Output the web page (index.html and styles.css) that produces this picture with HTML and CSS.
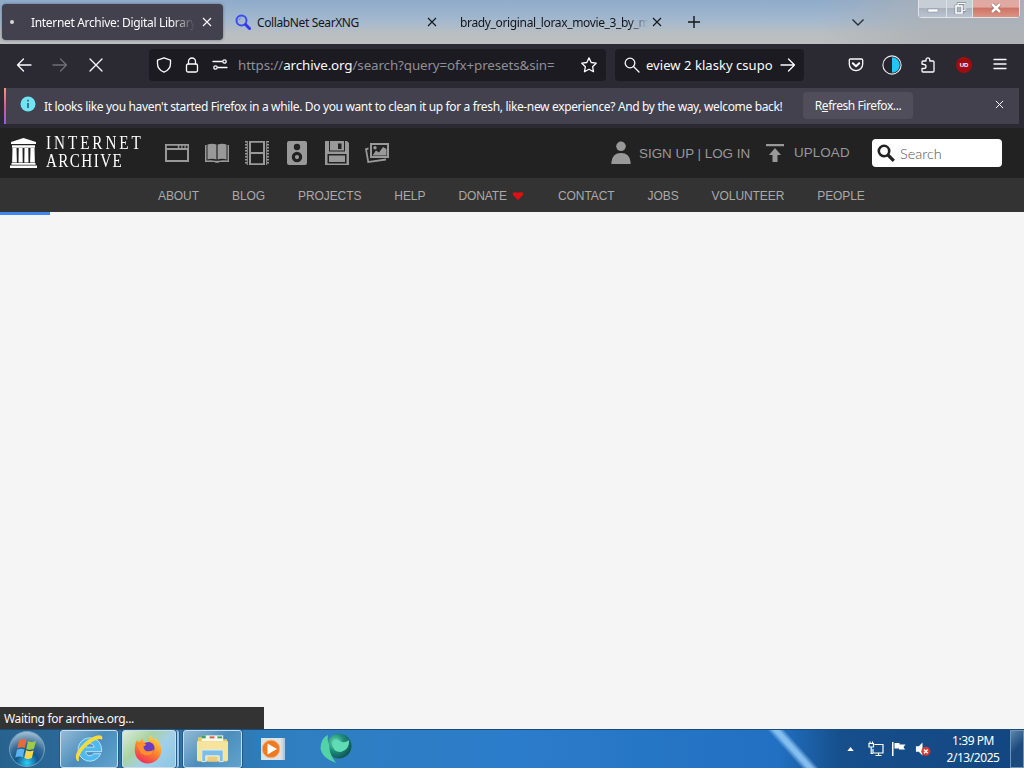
FILE: index.html
```html
<!DOCTYPE html>
<html lang="en">
<head>
<meta charset="UTF-8">
<meta name="viewport" content="width=device-width, initial-scale=1.0">
<link rel="stylesheet" href="styles.css">
<title>Internet Archive: Digital Library</title>
</head>
<body>
<div class="screen">
    <!-- tab strip -->
    <div class="tabs">
        <div class="tab active">
            <span class="dot"></span>
            <span class="tab-title t1">Internet Archive: Digital Library</span>
            <svg class="tab-close" viewBox="0 0 10 10"><path d="M1 1l8 8M9 1l-8 8"/></svg>
        </div>
        <div class="tab second">
            <svg class="searx" viewBox="0 0 16 16"><circle cx="6.500" cy="6.500" r="5" fill="none" stroke="#3b4bf0" stroke-width="2"/><path d="M4 6.500a2.500 2.500 0 0 1 2.500-2.500" fill="none" stroke="#7c8df5" stroke-width="1.200"/><path d="M10.500 10.500l4 4" stroke="#3036ff" stroke-width="3" stroke-linecap="round"/></svg>
            <span class="tab-title t2">CollabNet SearXNG</span>
            <svg class="tab-close" viewBox="0 0 10 10"><path d="M1 1l8 8M9 1l-8 8"/></svg>
        </div>
        <div class="tab third">
            <span class="tab-title t3">brady_original_lorax_movie_3_by_m</span>
            <svg class="tab-close" viewBox="0 0 10 10"><path d="M1 1l8 8M9 1l-8 8"/></svg>
        </div>
        <svg class="new-tab" viewBox="0 0 12 12"><path d="M6 0v12M0 6h12"/></svg>
        <svg class="all-tabs" viewBox="0 0 12 8"><path d="M0.500 1.500l5.500 5.500 5.500-5.500"/></svg>
        <div class="win-buttons">
            <div class="win min"><svg viewBox="0 0 12 12"><rect x="1" y="7" width="10" height="3" fill="#fff" stroke="#8c98a8" stroke-width=".6"/></svg></div>
            <div class="win max"><svg viewBox="0 0 12 12"><path d="M4 4V1.500h7v7H8.500" fill="none" stroke="#7d8896" stroke-width="2.400"/><rect x="2" y="4" width="6" height="7" fill="none" stroke="#7d8896" stroke-width="2.800"/><path d="M4 4V1.500h7v7H8.500" fill="none" stroke="#fff" stroke-width="1.200"/><rect x="2" y="4" width="6" height="7" fill="none" stroke="#fff" stroke-width="1.600"/></svg></div>
            <div class="win close"><svg viewBox="0 0 12 12"><path d="M2 2l8 8M10 2l-8 8" stroke="#8f5650" stroke-width="3.800"/><path d="M2 2l8 8M10 2l-8 8" stroke="#fff" stroke-width="2.600"/></svg></div>
        </div>
    </div>

    <!-- navigation toolbar -->
    <div class="toolbar">
        <svg class="ic back" viewBox="0 0 16 16"><path d="M15 8H1.500M7.500 2l-6 6 6 6"/></svg>
        <svg class="ic forward" viewBox="0 0 16 16"><path d="M1 8h13.500M8.500 2l6 6-6 6"/></svg>
        <svg class="ic stop" viewBox="0 0 16 16"><path d="M2 2l12 12M14 2L2 14"/></svg>
        <div class="urlbar">
            <svg class="ic" viewBox="0 0 16 16"><path d="M8 .8l6.500 2.400v3.300c0 4-2.300 7-6.500 8.700C3.800 13.500 1.500 10.500 1.500 6.500V3.200z"/></svg>
            <svg class="ic lock" viewBox="0 0 16 16"><rect x="2.500" y="7" width="11" height="8" rx="1.500"/><path d="M4.500 7V4.500a3.500 3.500 0 0 1 7 0V7"/></svg>
            <svg class="ic perms" viewBox="0 0 16 16"><path d="M1 4.500h9M15 10.500H6"/><circle cx="12.500" cy="4.500" r="1.700"/><circle cx="3.500" cy="10.500" r="1.700"/></svg>
            <span class="url">https://<b>archive.org</b>/search?query=ofx+presets&amp;sin=</span>
            <svg class="ic star" viewBox="0 0 16 16"><path d="M8 .9l2.200 4.600 5 .7-3.600 3.500.9 5L8 12.300 3.500 14.700l.9-5L.8 6.200l5-.7z"/></svg>
        </div>
        <div class="searchbar">
            <svg class="ic" viewBox="0 0 16 16"><circle cx="6" cy="6" r="4.800"/><path d="M9.500 9.500l5.500 5.500"/></svg>
            <span class="query">eview 2 klasky csupo</span>
            <svg class="ic go" viewBox="0 0 16 16"><path d="M1 8h13.500M8.500 2l6 6-6 6"/></svg>
        </div>
        <div class="extensions">
            <svg class="ic" viewBox="0 0 16 16"><path d="M2.500 2h11q1.200 0 1.200 1.200V7a6.700 6.700 0 0 1-13.400 0V3.200Q1.300 2 2.500 2z"/><path d="M4.800 6.300L8 9.300l3.200-3" stroke-width="2"/></svg>
            <svg class="reader" viewBox="0 0 18 18"><circle cx="9" cy="9" r="8.200" fill="#26252c" stroke="#e8e8ec" stroke-width="1"/><path d="M9 2a7 7 0 0 1 0 14z" fill="#22c5f4"/></svg>
            <svg class="ic puzzle" viewBox="0 0 16 16"><path d="M2 7V5q0-1 1-1h3V2.700a1.900 1.900 0 0 1 3.800 0V4h3.200q1 0 1 1v9q0 1-1 1H3q-1 0-1-1v-2.500h2a2 2 0 0 0 0-4z"/></svg>
            <span class="ublock">UD</span>
            <svg class="ic menu" viewBox="0 0 16 16"><path d="M2 2.500h12M2 7h12M2 11.500h12"/></svg>
        </div>
    </div>

    <!-- welcome back bar -->
    <div class="notice">
        <svg class="info" viewBox="0 0 16 16"><circle cx="8" cy="8" r="7.500" fill="#6fe4f5"/><path d="M8 7v5M8 3.800v1.700" stroke="#38566a" stroke-width="1.600"/></svg>
        <span class="notice-text">It looks like you haven't started Firefox in a while. Do you want to clean it up for a fresh, like-new experience? And by the way, welcome back!</span>
        <div class="refresh"><span>R<u>e</u>fresh Firefox...</span></div>
        <svg class="notice-close" viewBox="0 0 10 10"><path d="M1 1l8 8M9 1l-8 8"/></svg>
    </div>

    <!-- archive.org -->
    <div class="topnav">
        <svg class="temple" viewBox="0 0 27 30"><path d="M13.500 0L26 4v2H1V4zM2 7.300h23v2.400H2zM0 27.500h27V30H0zM1.500 25h24v1.700h-24z"/><path d="M2.500 10h4l.4 14.500H2.100zM8.700 10h3.800l.2 14.500H8.500zM14.500 10h3.800l.2 14.500h-4.200zM20.500 10h4l.4 14.500h-4.800z"/></svg>
        <div class="wordmark"><span class="w1">INTERNET</span><span class="w2">ARCHIVE</span></div>
        <div class="media">
            <svg viewBox="0 0 24 24"><path fill-rule="evenodd" d="M0 3h24v18H0zM2 9v10h20V9zM1.800 4.800v2.200h11v-2.200zM14.300 4.800v2.200h2v-2.200zM17.500 4.800v2.200h2v-2.200zM20.700 4.800v2.200h1.800v-2.200z"/></svg>
            <svg viewBox="0 0 24 24"><path d="M2.500 3.500Q7 2 11.400 3.500v15Q7 17 2.500 18.500zM12.600 3.500Q17 2 21.500 3.500v15Q17 17 12.600 18.500z"/><path d="M0 4h1.500v15.500q5-.8 9 .3h3q4-1.100 9-.3V4H24v17h-9.500l-1 .8h-3l-1-.8H0z"/></svg>
            <svg viewBox="0 0 24 24"><path fill-rule="evenodd" d="M4 0h16v24H4zM6 1.700v9.400h12V1.700zM6 13v9.300h12V13z"/><path class="film" d="M1 0v24M23 0v24"/><path class="perf" d="M2.300 0v24M21.700 0v24"/></svg>
            <svg viewBox="0 0 24 24"><path fill-rule="evenodd" d="M4 0h16q2 0 2 2v20q0 2-2 2H4q-2 0-2-2V2q0-2 2-2zM12 2.800a3.200 3.200 0 1 0 0 6.400 3.200 3.200 0 1 0 0-6.400zM12 10.800a5.200 5.200 0 1 0 0 10.400 5.200 5.200 0 1 0 0-10.400zM12 14a2.100 2.100 0 1 1 0 4.200 2.100 2.100 0 1 1 0-4.200z"/></svg>
            <svg viewBox="0 0 24 24"><path d="M0 0h22l2 2v22H0z"/><path class="cut" d="M4 0h1v9.500h14V0h1v10.500H4zM13 2.500h3.500v5.500H13zM2.500 13h19v9.500h-19z"/><path d="M4 14.500h16v6.500H4z"/></svg>
            <svg viewBox="0 0 24 24"><path fill-rule="evenodd" d="M5 2h19v15H5zM7 4v11h15V4z"/><path d="M7.500 14.500l3.500-5 3 2 4-5.500 3.500 2v6.500z"/><circle cx="10" cy="6.700" r="1.700"/><path d="M0 7.500l3.500-1v2l-1.500.4 2 11 17-2.500v2L2.500 22z"/></svg>
        </div>
        <svg class="person" viewBox="0 0 20 24"><circle cx="10" cy="5.500" r="5"/><path d="M0 24v-2q1-9.500 10-9.500T20 22v2z"/></svg>
        <span class="login">SIGN UP | LOG IN</span>
        <svg class="upload-ic" viewBox="0 0 18 20"><path d="M0 1h18v2.300H0zM9 5l6 7h-3.500V19H6.500v-7H3z"/></svg>
        <span class="upload">UPLOAD</span>
        <div class="ia-search">
            <svg viewBox="0 0 18 18"><circle cx="7" cy="7" r="5.200" fill="none" stroke="#222" stroke-width="2.600"/><path d="M11 11l5.800 5.800" stroke="#222" stroke-width="3.200"/></svg>
            <span>Search</span>
        </div>
    </div>
    <div class="subnav">
        <span>ABOUT</span><span>BLOG</span><span>PROJECTS</span><span>HELP</span>
        <span class="donate">DONATE<svg viewBox="0 0 12 8"><path d="M1.500.5Q4-.2 6 .8 8-.2 10.500.5q1.500 1.500 0 3L6 8 1.500 3.500Q0 2 1.500.5z"/></svg></span>
        <span>CONTACT</span><span>JOBS</span><span>VOLUNTEER</span><span>PEOPLE</span>
    </div>
    <div class="page">
        <div class="progress"></div>
        <div class="status">Waiting for archive.org...</div>
    </div>

    <!-- taskbar -->
    <div class="taskbar">
        <svg class="start" viewBox="0 0 38 38"><defs><radialGradient id="orb" cx=".5" cy=".9" r=".9"><stop offset="0" stop-color="#2cd0fa"/><stop offset=".35" stop-color="#14568c"/><stop offset=".6" stop-color="#356a94"/><stop offset="1" stop-color="#a8c4d6"/></radialGradient></defs><circle cx="19" cy="19" r="17.500" fill="url(#orb)" stroke="#73a0c2"/><path d="M11 10.500q4-2.500 7.500-.5l-1.700 8q-3.500-1.800-7.500.3z" fill="#e8693a"/><path d="M20 11q4 2 8-.3l-2 8q-4 2.200-7.700.2z" fill="#9bcb4a"/><path d="M9 19.700q4-2 7.500-.2l-1.700 7.700q-3.500-1.700-7.500.3z" fill="#5bb4ee"/><path d="M18 20.300q4 2 7.700-.1l-1.900 7.700q-3.800 2-7.500.2z" fill="#fbd64a"/></svg>
        <div class="task ie"><svg viewBox="0 0 32 32"><path fill-rule="evenodd" d="M17 4a12.500 12.500 0 1 0 11.500 17h-7.500q-1.500 2.200-4 2.200-4 0-4.500-4.400h17Q30 5 17 4zm-4.500 10q.7-3.800 4.500-3.800t4.600 3.800z" fill="#4fb9f0" stroke="#d9f3ff" stroke-width=".8"/><path d="M3.500 29Q-2 22 11 9.500 22 0 28.500 1.500q3 1 1 5Q28 3.500 20 8 9 15 6 23q-1.500 3.500-.5 5.500z" fill="#f4dc3c"/></svg></div>
        <div class="task ff"><svg viewBox="0 0 32 32"><defs><linearGradient id="fox" x1=".8" y1="0" x2=".3" y2="1"><stop offset="0" stop-color="#ffe04a"/><stop offset=".5" stop-color="#ff8a2a"/><stop offset="1" stop-color="#ef2c5c"/></linearGradient></defs><path d="M19 1q1 3 4 5.500 1-1 1-2.500 6 5.500 6 13a14 14 0 0 1-28 1Q1.500 11 4.500 6q.5 2 1.500 3 2-3 4-4 0 2 1.500 3.500 3 0 5 .5Q16 4 19 1z" fill="url(#fox)"/><circle cx="16.500" cy="15" r="6.500" fill="#6b3bc4"/><path d="M4 12q5-4 10-1-1 2-3 2.500 1 5 5.500 5 3.500 0 5.500-2-.5 5.500-6 6-7 .5-9-5-1-3.500-3-5.500z" fill="#ff8f2b"/></svg></div>
        <div class="task folder"><svg viewBox="0 0 34 30"><path d="M2 3h11l2 2h17v23H2z" fill="#e9c969"/><path d="M6 1h22v6H6z" fill="#f8f9ec"/><path d="M6 1h4v3H6z" fill="#3aa45b"/><path d="M14 2h5v2h-5z" fill="#d8584b"/><path d="M22 2h5v2h-5z" fill="#4d9c5a"/><path d="M1 7h32v20H1z" fill="#f6e49c"/><path d="M6 28V17q0-1 1-1h20q1 0 1 1v11h-4v-6H10v6z" fill="#7ebee6" stroke="#d4efff"/><path d="M12 23h10v5H12z" fill="#e9cd7c"/></svg></div>
        <svg class="player" viewBox="0 0 26 26"><path d="M6 2h19v22H6z" fill="#a9cae6"/><path d="M3 2h20v22H3z" fill="#c9dcec"/><rect x="1" y="2" width="20" height="22" fill="#dbe3e6"/><circle cx="11" cy="13" r="8.800" fill="#ee7a22" stroke="#f6b27c"/><path d="M7.500 7.500l9.500 5.500-9.500 5.500z" fill="#fff"/></svg>
        <svg class="orb2" viewBox="0 0 32 32"><defs><radialGradient id="teal" cx=".35" cy=".35" r=".75"><stop offset="0" stop-color="#6fe0b8"/><stop offset=".45" stop-color="#1f8f7c"/><stop offset="1" stop-color="#0b4c50"/></radialGradient></defs><circle cx="19" cy="13" r="12.500" fill="url(#teal)"/><path d="M8 2q-1 6 1 9l1 8q2 6 6 11Q2 25 .5 16 .5 5 8 2z" fill="#53d2a8"/><path d="M12 9q4-5 8-1 4 3 9-1 1 9-8 12-9 0-9-10z" fill="#5fdcb4"/></svg>
        <div class="tray">
            <svg class="up" viewBox="0 0 8 5"><path d="M4 0l4 5H0z"/></svg>
            <svg class="net" viewBox="0 0 16 16"><path d="M6.500 3.500H15v8.500H5V8M7.500 14.500h6M10.500 12v2.500M1 2.500h4.500V6H1zM2 .500v2M4.500.500v2M3.200 6v6.500H5"/></svg>
            <svg class="flag" viewBox="0 0 16 16"><path d="M1 1h1.500v14H1zM3.500 2h5v1.500h6L12.500 6l1.500 2.500H8V7.500H3.500z"/></svg>
            <svg class="vol" viewBox="0 0 17 16"><path d="M1 5h3l4-4v14l-4-4H1z" fill="#fff"/><circle cx="11.500" cy="10.500" r="4.800" fill="#d83a32"/><path d="M9.500 8.500l4 4M13.500 8.500l-4 4" stroke="#fff" stroke-width="1.500"/></svg>
            <div class="clock"><span>1:39 PM</span><span class="date">2/13/2025</span></div>
            <div class="peek"></div>
        </div>
    </div>
</div>
</body>
</html>
```

FILE: styles.css
```css
body {
    margin: 0;
    font-family: "Noto Sans", sans-serif;
    overflow: hidden;
}

svg {
    display: block;
    flex: none;
}

.screen {
    width: 1024px;
    height: 768px;
    display: flex;
    flex-direction: column;
    background: #f5f5f5;
}

.screen > div {
    box-sizing: border-box;
    flex: none;
    white-space: nowrap;
}

/* tab strip */
.tabs {
    display: flex;
    align-items: center;
    height: 44px;
    padding-left: 2px;
    color: #15141a;
    font-size: 12px;
    background:
        linear-gradient(to right, rgba(190, 195, 200, 0) 80%, rgba(172, 176, 180, .8) 91%),
        linear-gradient(to bottom, #8fabcb 0, #a2b8ce 45%, #b9bec2 75%, #bdbfc0 100%);
}

.tab {
    display: flex;
    align-items: center;
    box-sizing: border-box;
    height: 36px;
}

.tab-title {
    overflow: hidden;
}

.tab-close {
    width: 10px;
    height: 10px;
    fill: none;
    stroke: currentColor;
    stroke-width: 1.1;
}

.active {
    width: 221px;
    padding-left: 8px;
    border-radius: 4px;
    background: #42414d;
    color: #fbfbfe;
    box-shadow: 0 0 3px rgba(40, 40, 60, .5);
}

.dot {
    width: 4px;
    height: 4px;
    border-radius: 2px;
    background: #d5d5dc;
}

.t1 {
    width: 164px;
    margin: 0 7px 0 17px;
    letter-spacing: -.33px;
    -webkit-mask-image: linear-gradient(to right, #000 86%, transparent);
}

.second {
    width: 214px;
    padding-left: 12px;
}

.searx {
    width: 16px;
    height: 16px;
}

.t2 {
    width: 164px;
    margin: 0 6px;
    letter-spacing: -.38px;
}

.third {
    width: 225px;
    padding-left: 23px;
}

.t3 {
    width: 188px;
    margin-right: 4px;
    letter-spacing: -.35px;
    -webkit-mask-image: linear-gradient(to right, #000 90%, transparent);
}

.new-tab {
    width: 12px;
    height: 12px;
    margin-left: 26px;
    fill: none;
    stroke: #15141a;
    stroke-width: 1.4;
}

.all-tabs {
    width: 12px;
    height: 8px;
    margin-left: 152px;
    fill: none;
    stroke: #2a2f38;
    stroke-width: 1.4;
}

.win-buttons {
    display: flex;
    align-self: flex-start;
    margin-left: 54px;
    height: 17px;
    border: 1px solid #e0e4e9;
    border-top: 0;
    border-radius: 0 0 4px 4px;
}

.win {
    display: flex;
    justify-content: center;
    align-items: center;
    width: 27px;
    background: linear-gradient(#c8ced6 45%, #a9b2bd 50%, #bac4d0);
    border-right: 1px solid #e0e4e9;
}

.win svg {
    width: 12px;
    height: 12px;
    margin-top: -2px;
}

.win.max {
    width: 25px;
}

.win.close {
    width: 46px;
    border: 0;
    background: linear-gradient(#e0aaa2 40%, #cd7567 50%, #dc9484);
}

/* navigation toolbar */
.toolbar {
    display: flex;
    align-items: center;
    height: 44px;
    padding: 0 0 2px 16px;
    background: #2b2a33;
}

.ic {
    width: 16px;
    height: 16px;
    fill: none;
    stroke: #fbfbfe;
    stroke-width: 1.3;
    stroke-linejoin: round;
    stroke-linecap: round;
}

.forward {
    margin: 0 20px;
    stroke: #6f6e77;
}

.urlbar,
.searchbar {
    display: flex;
    align-items: center;
    box-sizing: border-box;
    height: 32px;
    background: #1c1b22;
    border-radius: 4px;
}

.urlbar {
    width: 457px;
    margin-left: 45px;
    padding-left: 7px;
}

.lock {
    margin: 0 12px;
}

.url {
    width: 343px;
    margin-left: 10px;
    font-size: 13.4px;
    color: #8f8f98;
    letter-spacing: -.12px;
}

.url b {
    font-weight: normal;
    color: #fbfbfe;
}

.searchbar {
    width: 189px;
    margin-left: 9px;
    padding-left: 9px;
}

.query {
    width: 128px;
    margin: 0 6px;
    font-size: 13px;
    letter-spacing: .05px;
    color: #fbfbfe;
}

.extensions {
    display: flex;
    align-items: center;
    gap: 20px;
    margin-left: 44px;
}

.reader {
    width: 20px;
    height: 20px;
    margin: 0 -2px;
}

.ublock {
    width: 16px;
    height: 16px;
    border-radius: 8px;
    background: #a00c12;
    color: #fff;
    font: bold 6px/16px "Liberation Sans", sans-serif;
    text-align: center;
}

/* welcome back bar */
.notice {
    display: flex;
    align-items: center;
    height: 36px;
    margin-right: 5px;
    margin-left: 4px;
    padding-left: 14px;
    border-left: 2px solid;
    border-image: linear-gradient(#ff9a6a, #e0569a, #9059ff) 1;
    background: #42414d;
    color: #fbfbfe;
    font-size: 12px;
    box-shadow: 0 0 0 6px #2b2a33;
    clip-path: inset(0 -6px -4px -6px);
}

.info {
    width: 16px;
    height: 16px;
    margin-top: -5px;
}

.notice-text {
    width: 759px;
    margin-left: 8px;
    letter-spacing: -.35px;
}

.refresh {
    width: 110px;
    height: 27px;
    margin-top: -1px;
    line-height: 27px;
    border-radius: 4px;
    background: #4f4e5a;
    text-align: center;
    letter-spacing: -.42px;
}

.notice-close {
    width: 9px;
    height: 9px;
    margin: -4px 0 0 82px;
    fill: none;
    stroke: #fbfbfe;
    stroke-width: 1.1;
}

/* archive.org header */
.topnav {
    display: flex;
    align-items: center;
    height: 51px;
    margin-top: 3px;
    padding-left: 10px;
    background: #222;
    color: #999;
    font: 13.4px "Liberation Sans", sans-serif;
}

.topnav svg {
    fill: #999;
}

.topnav .temple {
    width: 27px;
    height: 30px;
    fill: #fff;
}

.wordmark {
    display: flex;
    flex-direction: column;
    width: 98px;
    margin: -1px 0 0 9px;
    color: #fff;
    font: 18.5px/18px "Liberation Serif", serif;
    transform: scaleX(.82);
    transform-origin: left;
}

.w1 {
    letter-spacing: 3.6px;
}

.w2 {
    letter-spacing: 1.7px;
}

.media {
    display: flex;
    gap: 16px;
    margin-left: 21px;
}

.media svg {
    width: 24px;
    height: 24px;
}

.media .cut {
    fill: #222;
}

.film {
    stroke: #999;
    stroke-width: 2;
    stroke-dasharray: 1.5 1.5;
}

.perf {
    stroke: #999;
    stroke-width: 1;
}

.person {
    width: 20px;
    height: 23px;
    margin-left: 222px;
}

.login {
    width: 112px;
    margin: 1px 0 0 8px;
}

.upload-ic {
    width: 18px;
    height: 20px;
    margin-left: 15px;
}

.upload {
    width: 58px;
    margin-left: 10px;
    letter-spacing: .1px;
}

.ia-search {
    display: flex;
    align-items: center;
    box-sizing: border-box;
    width: 130px;
    height: 28px;
    margin-left: 20px;
    padding-left: 5px;
    border-radius: 4px;
    background: #fff;
    color: #555;
    font: 300 14.5px Lato, sans-serif;
}

.ia-search svg {
    width: 18px;
    height: 18px;
    margin-right: 5px;
}

.ia-search span {
    margin-top: 1px;
}

.subnav {
    display: flex;
    align-items: center;
    gap: 33px;
    height: 34px;
    padding: 2px 0 0 158px;
    background: #333;
    color: #aaa;
    font: 12px "Liberation Sans", sans-serif;
    letter-spacing: -.08px;
}

.donate {
    display: flex;
    align-items: center;
}

.donate svg {
    width: 12px;
    height: 8px;
    margin: -1px 1px 0 5px;
    fill: #e00f14;
}

.page {
    display: flex;
    flex-direction: column;
    justify-content: space-between;
    height: 517px;
    background: #f5f5f5;
}

.progress {
    width: 50px;
    height: 3px;
    background: #4086ec;
}

.status {
    box-sizing: border-box;
    width: 264px;
    height: 22px;
    padding-left: 4px;
    background: #333;
    color: #fbfbfe;
    font-size: 12px;
    line-height: 23px;
    letter-spacing: -.33px;
}

/* taskbar */
.taskbar {
    display: flex;
    align-items: center;
    height: 39px;
    padding-left: 8px;
    border-top: 1px solid #1b4a78;
    background:
        linear-gradient(48deg, transparent 40%, rgba(150, 205, 250, .85) 47%, rgba(150, 205, 250, .85) 52%, transparent 59%) 765px 0 / 58px 39px no-repeat,
        linear-gradient(to right, #28638f 0, #2f74a9 18%, #2f7fc0 28%, #2b7cca 50%, #2170c2 76%, #164f8c 82%, #134680 100%);
}

.start {
    width: 38px;
    height: 38px;
}

.task {
    display: flex;
    justify-content: center;
    align-items: center;
    box-sizing: border-box;
    height: 38px;
    border: 1px solid #c5dff0;
    border-radius: 3px;
    box-shadow: 0 0 0 1px #215a88;
    background: linear-gradient(135deg, #94bbd6, #4b8dbc 50%, #62a3cd);
}

.task svg {
    width: 30px;
    height: 30px;
}

.ie {
    width: 58px;
    margin-left: 14px;
}

.ff {
    width: 54px;
    margin-left: 4px;
    background: linear-gradient(135deg, #dcebd8, #a9d3a2 35%, #a3cfe8 60%, #8bc6e4);
    box-shadow: 0 0 0 1px #215a88, 3px 0 0 0 #9cc6e0, 4px 0 0 0 #215a88;
}

.task.ff svg {
    margin-right: 3px;
}

.folder {
    width: 59px;
    margin-left: 7px;
}

.task.folder svg {
    width: 33px;
}

.player {
    width: 26px;
    height: 26px;
    margin-left: 18px;
}

.orb2 {
    width: 32px;
    height: 32px;
    margin-left: 34px;
}

.tray {
    display: flex;
    align-items: center;
    margin-left: auto;
    color: #fff;
    font-size: 12px;
}

.tray svg {
    fill: #fff;
}

.up {
    width: 7px;
    height: 4px;
    margin-right: 14px;
}

.tray .net {
    width: 16px;
    height: 16px;
    margin-right: 7px;
    fill: none;
    stroke: #fff;
    stroke-width: 1.2;
}

.flag {
    width: 16px;
    height: 16px;
    margin-right: 8px;
}

.vol {
    width: 16px;
    height: 16px;
}

.clock {
    display: flex;
    flex-direction: column;
    align-items: center;
    width: 54px;
    margin: 0 10px 0 15px;
    line-height: 17px;
    letter-spacing: -.45px;
}

.peek {
    box-sizing: border-box;
    width: 14px;
    height: 38px;
    border: 1px solid #7195b6;
    background: linear-gradient(135deg, #5d86ab, #1c4a7c 50%);
}
```
